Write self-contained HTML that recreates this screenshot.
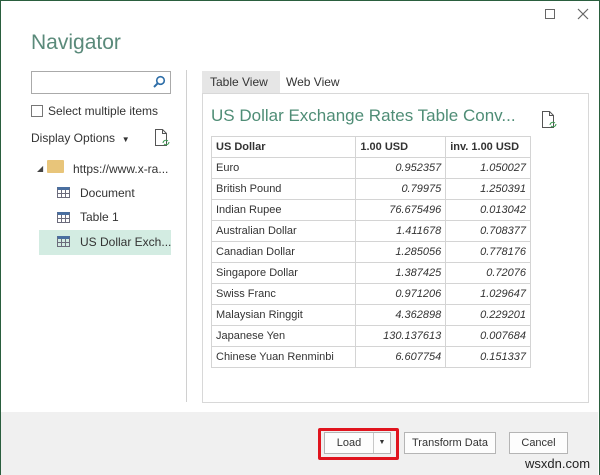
<!DOCTYPE html>
<html><head><style>
*{box-sizing:border-box;margin:0;padding:0}
body{width:600px;height:475px;overflow:hidden;font-family:"Liberation Sans",sans-serif;font-size:12px;color:#333;background:#fff;position:relative}
.win{position:absolute;left:0;top:0;width:600px;height:475px;border:1px solid #2a5e3e;border-bottom:none;background:#fff}
.abs{position:absolute}
.foot{position:absolute;left:1px;top:412px;width:597px;height:63px;background:#f0f0f0}
table{border-collapse:collapse;position:absolute;left:211px;top:136px;width:320px;font-size:11px}
td{border:1px solid #d4d4d4;height:21px;padding:0 4px;color:#333}
td.n{text-align:right;font-style:italic}
tr.h td{font-weight:bold}
.btn{position:absolute;top:432px;height:22px;border:1px solid #b5b5b5;background:#fdfdfd;font-size:11px;text-align:center;line-height:20px;color:#333}
.ti{position:absolute;left:57px;width:13px;height:11px;border:1px solid #6c6c7c;border-top:3px solid #4a6fa0;background:linear-gradient(#6c6c7c,#6c6c7c) 3px 0/1px 100% no-repeat,linear-gradient(#6c6c7c,#6c6c7c) 7px 0/1px 100% no-repeat,linear-gradient(#6c6c7c,#6c6c7c) 0 3px/100% 1px no-repeat}
</style></head><body>
<div class="win"></div>
<div class="abs" style="left:545px;top:9px;width:10px;height:10px;border:1px solid #666"></div>
<svg class="abs" style="left:577px;top:8px" width="12" height="12"><path d="M1 1L11 11M11 1L1 11" stroke="#666" stroke-width="1.2"/></svg>
<div class="abs" style="left:31px;top:31px;font-size:21px;color:#5a8a7a">Navigator</div>
<div class="abs" style="left:31px;top:71px;width:140px;height:23px;border:1px solid #aaa"></div>
<svg class="abs" style="left:152px;top:75px" width="14" height="14"><circle cx="8.5" cy="5.5" r="3.8" fill="none" stroke="#2e6ea8" stroke-width="1.6"/><line x1="5.8" y1="8.2" x2="2" y2="12" stroke="#2e6ea8" stroke-width="2"/></svg>
<div class="abs" style="left:31px;top:105px;width:12px;height:12px;border:1px solid #777"></div>
<div class="abs" style="left:48px;top:104px">Select multiple items</div>
<div class="abs" style="left:31px;top:131px">Display Options &nbsp;<span style="font-size:8px">▼</span></div>
<svg class="abs" style="left:154px;top:128px" width="16" height="20"><path d="M1.5 1.5h7l4 4v12h-11z M8.5 1.5v4h4" fill="#fff" stroke="#555"/><path d="M9 15a3 3 0 0 1 5-2 M15 14a3 3 0 0 1-5 2" fill="none" stroke="#3a9a50"/></svg>
<div class="abs" style="left:37px;top:164px;font-size:8px;color:#444">◢</div>
<div class="abs" style="left:47px;top:160px;width:17px;height:13px;background:#e8c57a;border-radius:1px"></div>
<div class="abs" style="left:73px;top:162px">https://www.x-ra...</div>
<div class="ti" style="top:187px"></div><div class="abs" style="left:80px;top:186px">Document</div>
<div class="ti" style="top:212px"></div><div class="abs" style="left:80px;top:210px">Table 1</div>
<div class="abs" style="left:39px;top:230px;width:132px;height:25px;background:#d3ece2"></div>
<div class="ti" style="top:236px"></div><div class="abs" style="left:80px;top:235px">US Dollar Exch...</div>
<div class="abs" style="left:186px;top:70px;width:1px;height:332px;background:#d0d0d0"></div>
<div class="abs" style="left:202px;top:71px;width:78px;height:22px;background:#e6e6e6"></div>
<div class="abs" style="left:210px;top:75px">Table View</div>
<div class="abs" style="left:286px;top:75px">Web View</div>
<div class="abs" style="left:202px;top:93px;width:387px;height:310px;border:1px solid #d8d8d8"></div>
<div class="abs" style="left:211px;top:106px;font-size:17px;color:#4f8d76">US Dollar Exchange Rates Table Conv...</div>
<svg class="abs" style="left:541px;top:110px" width="16" height="20"><path d="M1.5 1.5h7l4 4v12h-11z M8.5 1.5v4h4" fill="#fff" stroke="#555"/><path d="M9 15a3 3 0 0 1 5-2 M15 14a3 3 0 0 1-5 2" fill="none" stroke="#3a9a50"/></svg>
<table>
<colgroup><col style="width:145px"><col style="width:90px"><col style="width:85px"></colgroup>
<tr class="h"><td>US Dollar</td><td>1.00 USD</td><td>inv. 1.00 USD</td></tr>
<tr><td>Euro</td><td class="n">0.952357</td><td class="n">1.050027</td></tr>
<tr><td>British Pound</td><td class="n">0.79975</td><td class="n">1.250391</td></tr>
<tr><td>Indian Rupee</td><td class="n">76.675496</td><td class="n">0.013042</td></tr>
<tr><td>Australian Dollar</td><td class="n">1.411678</td><td class="n">0.708377</td></tr>
<tr><td>Canadian Dollar</td><td class="n">1.285056</td><td class="n">0.778176</td></tr>
<tr><td>Singapore Dollar</td><td class="n">1.387425</td><td class="n">0.72076</td></tr>
<tr><td>Swiss Franc</td><td class="n">0.971206</td><td class="n">1.029647</td></tr>
<tr><td>Malaysian Ringgit</td><td class="n">4.362898</td><td class="n">0.229201</td></tr>
<tr><td>Japanese Yen</td><td class="n">130.137613</td><td class="n">0.007684</td></tr>
<tr><td>Chinese Yuan Renminbi</td><td class="n">6.607754</td><td class="n">0.151337</td></tr>
</table>
<div class="foot"></div>
<div class="abs" style="left:318px;top:428px;width:81px;height:32px;border:3px solid #e0141e;border-radius:2px"></div>
<div class="btn" style="left:324px;width:67px;"><span style="position:absolute;left:0;width:48px">Load</span><span style="position:absolute;left:48px;top:0;height:20px;border-left:1px solid #c8c8c8;width:17px;font-size:7px">▼</span></div>
<div class="btn" style="left:404px;width:92px">Transform Data</div>
<div class="btn" style="left:509px;width:59px">Cancel</div>
<div class="abs" style="left:525px;top:456px;font-size:13px;color:#222">wsxdn.com</div>
</body></html>
